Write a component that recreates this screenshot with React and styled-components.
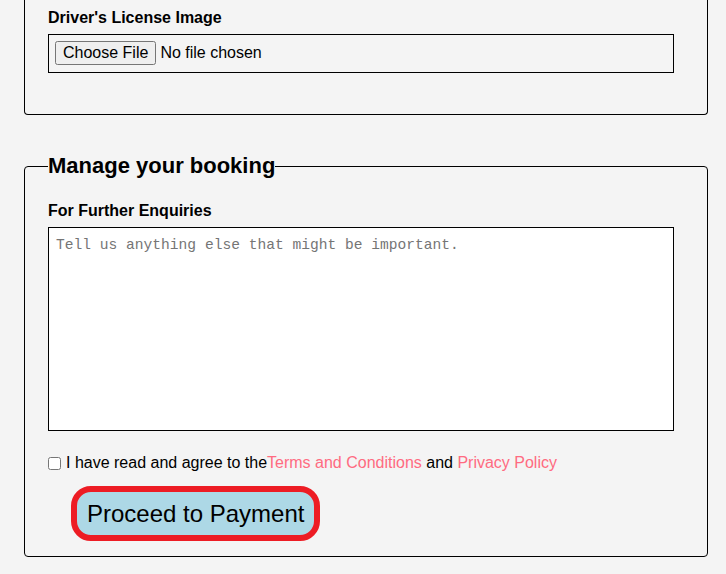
import styled, { createGlobalStyle } from "styled-components";

const GlobalStyle = createGlobalStyle`
  html, body {
    margin: 0;
    padding: 0;
    background: #f4f4f4;
    font-family: "Liberation Sans", Arial, sans-serif;
    color: #000;
  }
`;

const Page = styled.div`
  width: 726px;
  height: 574px;
  overflow: hidden;
  padding: 0 18px 0 24px;
  box-sizing: border-box;
`;

const Section = styled.fieldset`
  margin: ${(p) => (p.$cut ? "0" : "38px 0 0")};
  padding: ${(p) => (p.$cut ? "9px 33px 41px 23px" : "10px 33px 15px 23px")};
  border: 1px solid #000;
  border-top: ${(p) => (p.$cut ? "none" : "1px solid #000")};
  border-radius: ${(p) => (p.$cut ? "0 0 4px 4px" : "4px")};
  min-width: 0;
`;

const Legend = styled.legend`
  padding: 0;
  font-size: 22px;
  font-weight: bold;
  line-height: 26px;
`;

const Label = styled.label`
  display: block;
  font-size: 16px;
  font-weight: bold;
  line-height: 18px;
  margin: ${(p) => p.$top || "0"} 0 7px;
`;

const FileInput = styled.input`
  display: block;
  width: 100%;
  box-sizing: border-box;
  border: 1px solid #000;
  padding: 6px 6px 7px;
  font-family: "Liberation Sans", Arial, sans-serif;
  font-size: 16px;
`;

const TextArea = styled.textarea`
  display: block;
  width: 100%;
  height: 204px;
  box-sizing: border-box;
  border: 1px solid #000;
  border-radius: 0;
  background: #fff;
  padding: 9px 7px 7px;
  font-family: "Liberation Mono", monospace;
  font-size: 14.6px;
  resize: none;
  &::placeholder {
    color: #757575;
  }
`;

const AgreeRow = styled.div`
  display: flex;
  align-items: center;
  margin-top: 23px;
  font-size: 16px;
  line-height: 18px;
`;

const Check = styled.input`
  width: 13px;
  height: 13px;
  margin: 0 5px 0 0;
`;

const Link = styled.a`
  color: #ff6b81;
  text-decoration: none;
`;

const Proceed = styled.button`
  display: block;
  margin: 14px 0 0 23px;
  padding: 0 10px;
  height: 55px;
  background: #add8e6;
  border: 6px solid #ed1c24;
  border-radius: 20px;
  font-family: "Liberation Sans", Arial, sans-serif;
  font-size: 24px;
  color: #000;
`;

export default function App() {
  return (
    <Page>
      <GlobalStyle />
      <Section $cut>
        <Label>Driver's License Image</Label>
        <FileInput type="file" />
      </Section>
      <Section>
        <Legend>Manage your booking</Legend>
        <Label $top="13px">For Further Enquiries</Label>
        <TextArea placeholder="Tell us anything else that might be important." />
        <AgreeRow>
          <Check type="checkbox" />
          <span>
            I have read and agree to the<Link href="#">Terms and Conditions</Link> and{" "}
            <Link href="#">Privacy Policy</Link>
          </span>
        </AgreeRow>
        <Proceed>Proceed to Payment</Proceed>
      </Section>
    </Page>
  );
}
